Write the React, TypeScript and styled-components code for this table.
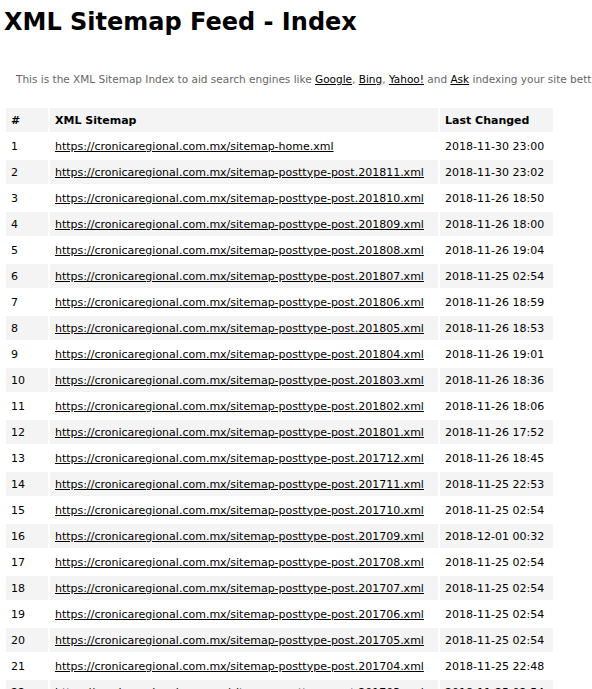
import styled, { createGlobalStyle } from 'styled-components'

const GlobalStyle = createGlobalStyle`
  body {
    margin: 0;
    background: #fff;
    font-family: "DejaVu Sans", Verdana, sans-serif;
    color: #000;
  }
`

const Page = styled.div`
  padding: 8px 4px 0;
`
const Title = styled.h1`
  margin: 0;
  font-size: 24px;
  line-height: 28px;
  font-weight: bold;
`
const Intro = styled.p`
  margin: 36px 0 0 12px;
  font-size: 10.5px;
  line-height: 14px;
  color: #666;
  white-space: nowrap;
`
const Link = styled.a`
  color: #000;
  text-decoration: underline;
`
const Table = styled.table`
  margin-top: 20px;
  border-spacing: 2px;
  font-size: 11px;
`
const HeadCell = styled.th<{ $w: number }>`
  width: ${p => p.$w}px;
  background: #f4f4f4;
  height: 24px;
  padding: 0 5px;
  text-align: left;
  font-weight: bold;
`
const Row = styled.tr<{ $shaded: boolean }>`
  background: ${p => (p.$shaded ? '#f4f4f4' : 'transparent')};
`
const Cell = styled.td`
  height: 24px;
  padding: 0 5px;
  white-space: nowrap;
`

const base = 'https://cronicaregional.com.mx/'

const rows: [string, string][] = [
  ['sitemap-home.xml', '2018-11-30 23:00'],
  ['sitemap-posttype-post.201811.xml', '2018-11-30 23:02'],
  ['sitemap-posttype-post.201810.xml', '2018-11-26 18:50'],
  ['sitemap-posttype-post.201809.xml', '2018-11-26 18:00'],
  ['sitemap-posttype-post.201808.xml', '2018-11-26 19:04'],
  ['sitemap-posttype-post.201807.xml', '2018-11-25 02:54'],
  ['sitemap-posttype-post.201806.xml', '2018-11-26 18:59'],
  ['sitemap-posttype-post.201805.xml', '2018-11-26 18:53'],
  ['sitemap-posttype-post.201804.xml', '2018-11-26 19:01'],
  ['sitemap-posttype-post.201803.xml', '2018-11-26 18:36'],
  ['sitemap-posttype-post.201802.xml', '2018-11-26 18:06'],
  ['sitemap-posttype-post.201801.xml', '2018-11-26 17:52'],
  ['sitemap-posttype-post.201712.xml', '2018-11-26 18:45'],
  ['sitemap-posttype-post.201711.xml', '2018-11-25 22:53'],
  ['sitemap-posttype-post.201710.xml', '2018-11-25 02:54'],
  ['sitemap-posttype-post.201709.xml', '2018-12-01 00:32'],
  ['sitemap-posttype-post.201708.xml', '2018-11-25 02:54'],
  ['sitemap-posttype-post.201707.xml', '2018-11-25 02:54'],
  ['sitemap-posttype-post.201706.xml', '2018-11-25 02:54'],
  ['sitemap-posttype-post.201705.xml', '2018-11-25 02:54'],
  ['sitemap-posttype-post.201704.xml', '2018-11-25 22:48'],
  ['sitemap-posttype-post.201703.xml', '2018-11-25 02:54'],
  ['sitemap-posttype-post.201702.xml', '2018-11-25 02:54'],
]

export default function App() {
  return (
    <Page>
      <GlobalStyle />
      <Title>XML Sitemap Feed - Index</Title>
      <Intro>
        This is the XML Sitemap Index to aid search engines like <Link href="#">Google</Link>,{' '}
        <Link href="#">Bing</Link>, <Link href="#">Yahoo!</Link> and <Link href="#">Ask</Link> indexing
        your site better.
      </Intro>
      <Table>
        <thead>
          <tr>
            <HeadCell $w={32}>#</HeadCell>
            <HeadCell $w={378}>XML Sitemap</HeadCell>
            <HeadCell $w={103}>Last Changed</HeadCell>
          </tr>
        </thead>
        <tbody>
          {rows.map(([path, date], i) => (
            <Row key={path} $shaded={i % 2 === 1}>
              <Cell>{i + 1}</Cell>
              <Cell>
                <Link href="#">{base + path}</Link>
              </Cell>
              <Cell>{date}</Cell>
            </Row>
          ))}
        </tbody>
      </Table>
    </Page>
  )
}
